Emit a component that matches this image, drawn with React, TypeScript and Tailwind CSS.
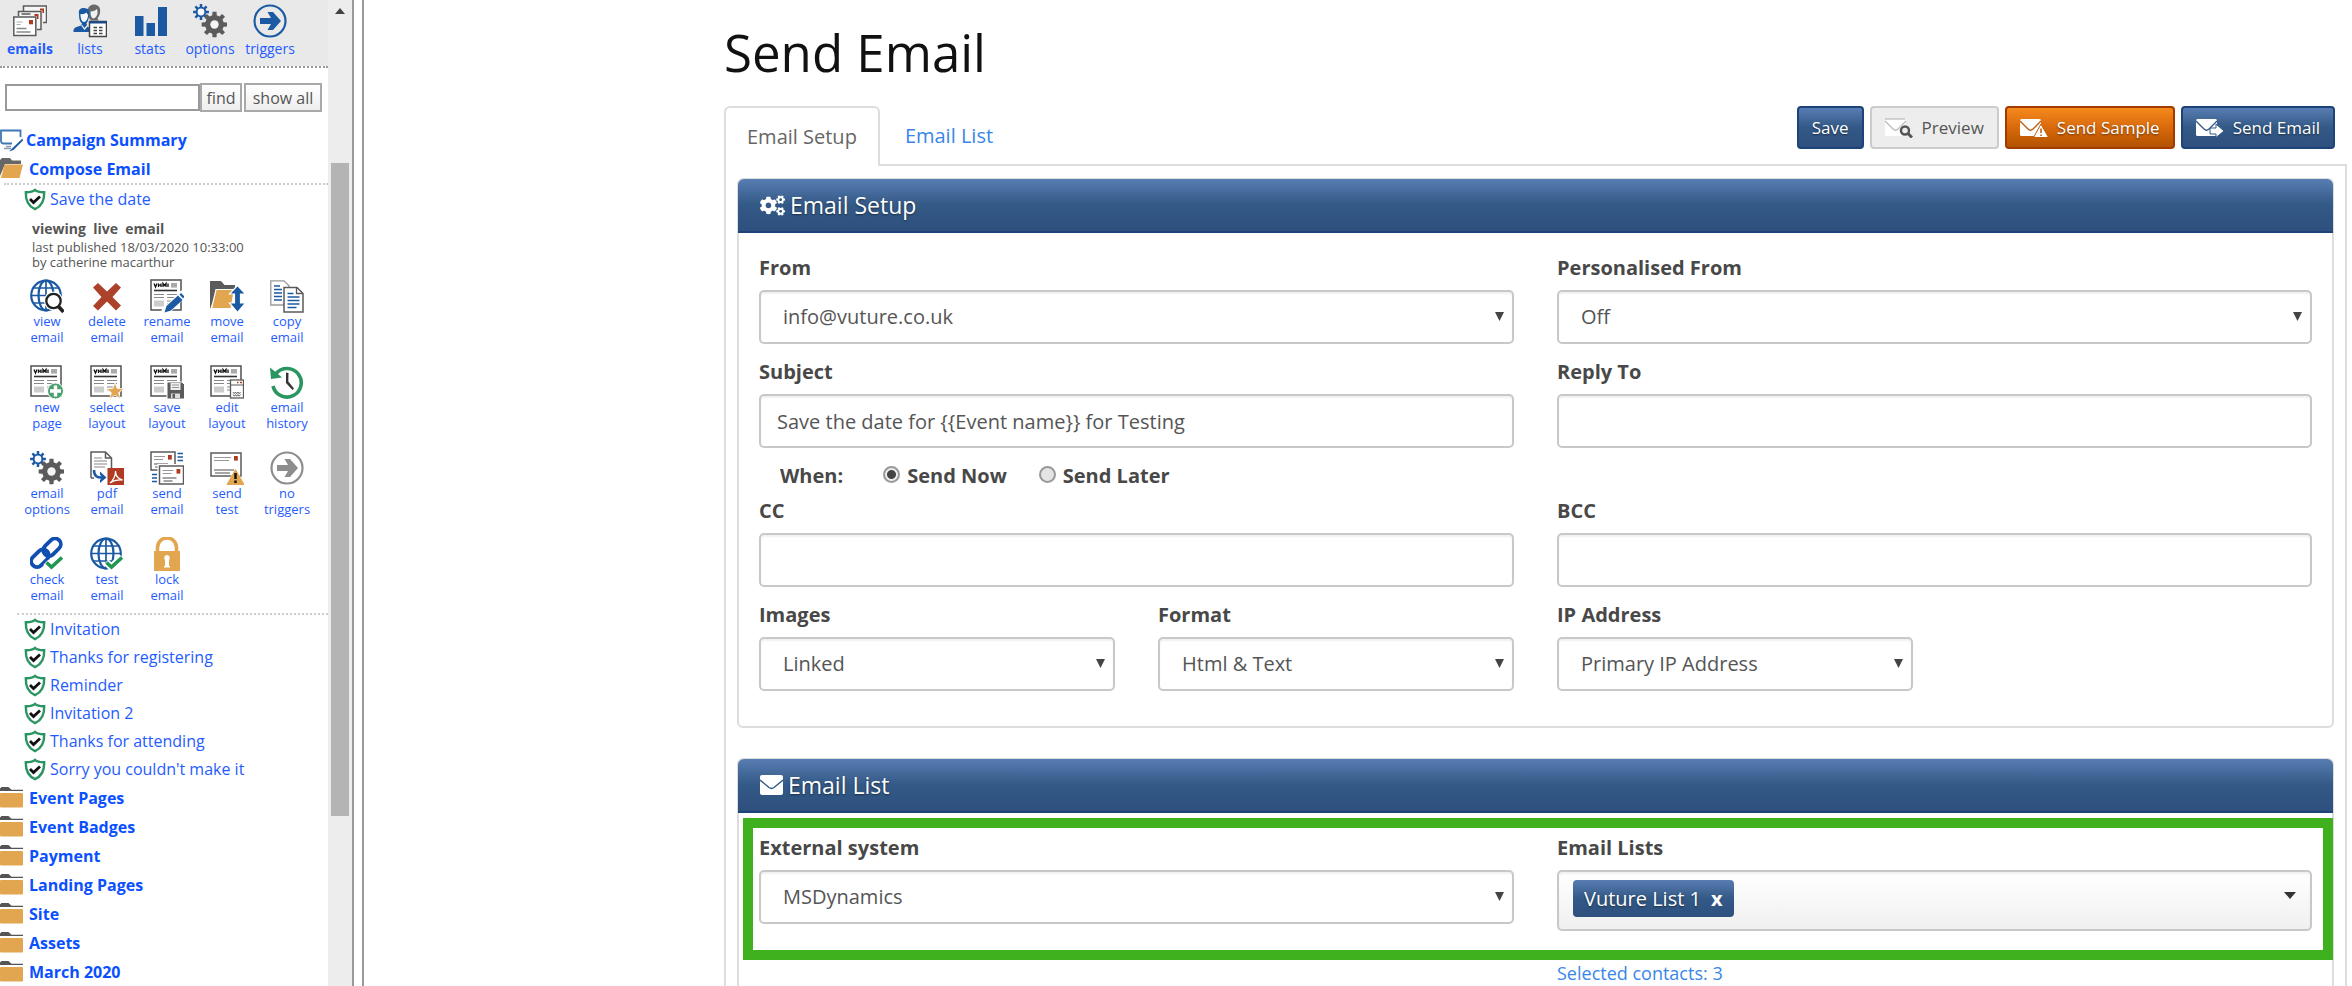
import React, { useState } from 'react';
import { FaCogs } from 'react-icons/fa';

const BLUE = '#1b5aa3';
const DARK = '#5b5b5b';
const TAN = '#e2a550';
const GREEN = '#2a9560';

const gearPath = (cx: number, cy: number, outer: number, inner: number, teeth = 8) => {
  const pts: string[] = [];
  const step = (Math.PI * 2) / teeth;
  for (let i = 0; i < teeth; i++) {
    const a = i * step;
    [[-0.3, inner], [-0.2, outer], [0.2, outer], [0.3, inner]].forEach(([o, r]) => {
      pts.push(`${(cx + r * Math.sin(a + o * step)).toFixed(2)} ${(cy - r * Math.cos(a + o * step)).toFixed(2)}`);
    });
  }
  return `M${pts.join('L')}Z`;
};

const Icon: React.FC<{ children: React.ReactNode }> = ({ children }) => (
  <svg width="34" height="34" viewBox="0 0 34 34" fill="none" className="shrink-0" aria-hidden="true">
    {children}
  </svg>
);

/* Shared pieces */
const Gears = () => (
  <>
    <path d={gearPath(8, 8, 8, 5.4)} fill={BLUE} />
    <circle cx="8" cy="8" r="3.4" fill="#f6f8fb" />
    <path d={gearPath(21.5, 20.5, 13, 9.4)} fill={DARK} />
    <circle cx="21.5" cy="20.5" r="4.2" fill="#f4f4f4" />
  </>
);

const Newspaper = () => (
  <>
    <rect x="1" y="1" width="30" height="30" fill="#fff" stroke={DARK} strokeWidth="1.6" />
    <path d="M4 4.500l1.500 3.500 1.500-3.500M8.500 4.500v3.500M11 4.500V8M8.500 6.200H11M13 8V4.500l1.500 2 1.500-2V8M18 4.500V8" stroke="#111" strokeWidth="1.300" />
    <rect x="21" y="4" width="6" height="4.6" fill="#aaa" />
    <path d="M4 11.500h23" stroke="#333" strokeWidth="1.600" />
    <path d="M4 15.500h10M17 15.500h10M4 18.500h10M17 18.500h10M17 22h6M17 25h5" stroke="#888" strokeWidth="1.200" />
    <rect x="4" y="21.500" width="10" height="6" fill="#ccc" />
  </>
);

const Globe = () => (
  <g stroke={BLUE} strokeWidth="2.200">
    <circle cx="16" cy="16.500" r="14.800" fill="#fff" />
    <ellipse cx="16" cy="16.500" rx="7.500" ry="14.800" />
    <path d="M16 2v29M2 16.500h28M4 9h24M4 24h24" strokeWidth="1.700" />
  </g>
);

const TickBadge = () => (
  <>
    <path d="M16 25l5 5 11-10" stroke="#fff" strokeWidth="7" />
    <path d="M16.500 25.500l5 4.500 10.500-9.500" stroke="#219653" strokeWidth="3.600" />
  </>
);

const Letter = ({ x, y, w, h }: { x: number; y: number; w: number; h: number }) => (
  <>
    <rect x={x} y={y} width={w} height={h} fill="#fff" stroke={DARK} strokeWidth="1.500" />
    <rect x={x + w - 7} y={y + 3} width="3.800" height="4.600" fill="#b03a1c" />
    <path d={`M${x + 3} ${y + 4.5}h${w - 13}M${x + 3} ${y + 7.5}h${w - 15}`} stroke="#999" strokeWidth="1.100" />
    <path d={`M${x + 3} ${y + h - 6}h${w - 10}M${x + 4} ${y + h - 3}h${w - 15}`} stroke="#888" strokeWidth="1.300" />
  </>
);

const icons: Record<string, React.ReactNode> = {
  emails: (
    <>
      <path d="M10.500 7V2h23v16.500H30V7z" fill="#f6f6f6" />
      <path d="M10.500 7V2h23v16.500H30" stroke={DARK} strokeWidth="1.500" />
      <path d="M27 4.500h4v4.500h-1.500V6.500H27z" fill="#b03a1c" />
      <path d="M5.500 12.500V7.500H28v18h-4v-13z" fill="#f6f6f6" />
      <path d="M5.500 12V7.500H28v18h-4M8.500 10h9" stroke={DARK} strokeWidth="1.500" />
      <path d="M21.500 10h4v5H24v-3h-2.500z" fill="#b03a1c" />
      <rect x="0.800" y="13" width="22" height="18.500" fill="#fff" stroke={DARK} strokeWidth="1.500" />
      <rect x="16" y="16" width="4" height="4.300" fill="#b03a1c" />
      <path d="M3.500 18h6M3.500 20.500h4" stroke="#aaa" />
      <path d="M3.500 24.500h10M3.500 28h14" stroke="#888" strokeWidth="1.400" />
    </>
  ),
  lists: (
    <>
      <path d="M15 5c1-6 11-6 12 0 .5 4-.5 7-2.500 9l1 2.500H18L15 13z" fill="#6a6a6a" />
      <path d="M17.500 7.500c3 0 5-1 6.500-2.500 1.500 4 0 8.500-3.500 9.500-2 0-3-3-3-7z" fill="#f1f1f1" />
      <path d="M6 10C5 4 10 3.500 13 4.500c4 0 4 4 3 8-.6 4-2 6-2.500 7l1 3 3 2v3.500H.500c-.5-3 1-4.500 4.500-5.500l3-1 1-2c-2-2-3-3.500-3-9.500z" fill={BLUE} />
      <path d="M7.500 10c3 .5 5-.5 6-1.500.5 1.500 1.500 1.500 1.500 2.500 0 4-2 7-4 7-2.500 0-3.500-4-3.500-8z" fill="#f6f8fb" />
      <path d="M8.500 21l3 4 3-3.500" stroke="#f6f8fb" strokeWidth="1.200" />
      <rect x="16.500" y="17.500" width="17" height="15" fill="#fff" stroke="#444" strokeWidth="1.500" />
      <path d="M16 18.300h18" stroke="#1d4a86" strokeWidth="2.400" />
      <path d="M20.500 23.500h3.500M26 23.500h3.500M20.500 26.500h3.500M26 26.500h3.500M20.500 29.500h3.500M26 29.500h3.500" stroke="#444" strokeWidth="1.500" />
    </>
  ),
  stats: <path d="M2 12h8.500v20H2zM13.500 19H22v13h-8.500zM25 3h9v29h-9z" fill={BLUE} />,
  options: <Gears />,
  triggers: (
    <>
      <circle cx="17" cy="17" r="15.500" stroke={BLUE} strokeWidth="2.200" />
      <path d="M7 14h11L14.500 8H20l8 9-8 9h-5.500L18 20H7z" fill={BLUE} />
    </>
  ),
  view: (
    <>
      <Globe />
      <circle cx="23.500" cy="22" r="9.500" fill="#fff" />
      <circle cx="23.500" cy="22" r="7.200" fill="#fff" stroke="#222" strokeWidth="2.300" />
      <path d="M28.500 27.500l5 5.500" stroke="#222" strokeWidth="3.600" />
    </>
  ),
  delete: <path d="M8 4l9 8.500L26 4l5 4.500-8.500 9.500 8.500 8.500L26 31.500l-9-9-9 9L3 27l8.500-9L3 8.500z" fill="#ad422b" />,
  rename: (
    <>
      <Newspaper />
      <path d="M14 34L34 14" stroke="#fff" strokeWidth="8" />
      <path d="M14.500 33.500l2-6.500L28 16.500l4.500 4.500L21 31.500zM29.500 15.500l1.500-1.500 3.500 3.500-1.500 2z" fill={BLUE} />
    </>
  ),
  move: (
    <>
      <path d="M0 30V2h11l3.500 4H25v7H7z" fill={DARK} />
      <path d="M6 10.500h18.500L21 29.500H1.500z" fill={TAN} stroke="#fff" strokeWidth="1.200" />
      <path d="M27.500 6.500l8 8.500h-5v9h5l-8 9.500-8-9.500h5v-9h-5z" fill={BLUE} stroke="#fff" strokeWidth="1.200" />
    </>
  ),
  copy: (
    <>
      <path d="M.8 1.800H14l5 5V26H.800z" fill="#fff" stroke="#999" strokeWidth="1.300" />
      <path d="M4 7h6M4 10.500h8M4 14h8M4 17.500h8M4 21h8" stroke={BLUE} strokeWidth="1.300" />
      <path d="M14 8.500h13l6 6V33H14z" fill="#fff" stroke={DARK} strokeWidth="1.500" />
      <path d="M26.500 8.500v6H33" stroke={DARK} strokeWidth="1.300" />
      <path d="M17.500 14.500h6M17.500 18h12M17.500 21.500h12M17.500 25h12M17.500 28.500h9" stroke={BLUE} strokeWidth="1.400" />
    </>
  ),
  new: (
    <>
      <Newspaper />
      <circle cx="25.500" cy="26" r="8" fill="#4da06f" stroke="#fff" />
      <path d="M25.500 20.500v11M20 26h11" stroke="#fff" strokeWidth="3.400" />
    </>
  ),
  select: (
    <>
      <Newspaper />
      <path d="M25 17.500l2.200 6 6.800.2-5.400 4 2 6.300-5.600-3.800-5.600 3.800 2-6.300-5.400-4 6.800-.2z" fill={TAN} stroke="#fff" strokeWidth=".8" />
    </>
  ),
  save: (
    <>
      <Newspaper />
      <path d="M17 17h15l2.500 2.500V34H17z" fill={DARK} stroke="#fff" />
      <path d="M20.500 18h10v7h-10z" fill="#eee" />
      <path d="M22 20h7M22 22.500h7" stroke="#999" />
      <path d="M21 28.500h9V33h-9z" fill="#ddd" />
      <path d="M22.500 29h2.500v4h-2.500z" fill={DARK} />
    </>
  ),
  edit: (
    <>
      <Newspaper />
      <rect x="20.500" y="15" width="13" height="18" fill="#fff" stroke={DARK} strokeWidth="1.300" />
      <path d="M20.500 20h13" stroke={DARK} />
      <path d="M27 17.500h1.500M30 17.500h2" stroke="#b03a1c" strokeWidth="1.500" />
      <path d="M23 27l1.200 1.700 1.300-1.700 1.200 1.700 1.300-1.700 1.200 1.700 1.300-1.700M23 29.500l1.200 1.700 1.300-1.700 1.200 1.700 1.300-1.700 1.200 1.700 1.300-1.700" stroke="#555" strokeWidth=".9" />
    </>
  ),
  history: (
    <>
      <path d="M6 8.500A14.300 14.300 0 1 1 3 21" stroke={GREEN} strokeWidth="3.600" />
      <path d="M0 2.500l1 11.500 11-1.500-4-3.500z" fill={GREEN} />
      <path d="M16 7.500l2.500.5-.2 8.500 5.700 7-1.500 1.500-6.500-7z" fill="#333" />
    </>
  ),
  pdf: (
    <>
      <path d="M1 27V1h14.500l6 6v10M15.500 1v6h6" fill="#fff" stroke={DARK} strokeWidth="1.500" />
      <path d="M1 27h3" stroke={DARK} strokeWidth="1.500" />
      <path d="M4 7h8M4 10h13M4 13h13M4 16h11" stroke="#888" strokeWidth="1.200" />
      <path d="M4 19c0 6 3 8 9 7.500" stroke={BLUE} strokeWidth="2.500" />
      <path d="M10 20.500l6.500 6-6.500 5.500v-3l2-2.500-2-3z" fill={BLUE} />
      <rect x="17.500" y="17" width="17" height="17" fill="#b03a22" />
      <path d="M20 32c3-2 6-8 5.500-12 0 5 3 8 7 9-5-.5-9 .5-12.500 3z" stroke="#fff" strokeWidth="1.300" />
    </>
  ),
  send: (
    <>
      <Letter x={1} y={1} w={24} h={18} />
      <path d="M27.500 2.500H33M27.500 6H33M27.500 9.500H33M2 23.500h5M2 27h5M2 30.500h5" stroke={BLUE} strokeWidth="1.400" />
      <rect x="7.500" y="13" width="27" height="21" fill="#fff" />
      <Letter x={9.500} y={15} w={24} h={18} />
    </>
  ),
  test: (
    <>
      <Letter x={1} y={2} w={30} h={23} />
      <path d="M25.500 16.500L35 34H16z" fill="#fff" />
      <path d="M25.500 18.500L34 33.500H17z" fill={TAN} stroke={TAN} strokeLinejoin="round" />
      <path d="M25.500 22v6M25.500 29.500v2.500" stroke="#111" strokeWidth="2.500" />
    </>
  ),
  none: (
    <>
      <circle cx="17" cy="17" r="15.500" stroke="#8d8d8d" strokeWidth="2.200" />
      <path d="M7 14h11L14.500 8H20l8 9-8 9h-5.500L18 20H7z" fill="#8d8d8d" />
    </>
  ),
  check: (
    <>
      <g stroke="#0f4fb0" strokeWidth="3.800">
        <rect x="12" y="4.500" width="20" height="11.500" rx="5.700" transform="rotate(-45 22 10.200)" />
        <rect x="0" y="15.500" width="20" height="11.500" rx="5.700" transform="rotate(-45 10 21.200)" />
      </g>
      <TickBadge />
    </>
  ),
  globe: (
    <>
      <Globe />
      <TickBadge />
    </>
  ),
  lock: (
    <>
      <path d="M7.500 15V10.500a9.500 9.500 0 0 1 19 0V15" stroke={TAN} strokeWidth="3.600" />
      <rect x="4" y="14" width="26" height="20" fill={TAN} />
      <path d="M17 18a3 3 0 0 1 2 5v6h1v1.500h-6V29h1v-6a3 3 0 0 1 2-5z" fill="#fff" />
    </>
  ),
};

const Shield = () => (
  <svg width="22" height="23" viewBox="0 0 22 23" fill="none" className="shrink-0" aria-hidden="true">
    <path d="M11 1.800C8.500 4 5 4.300 1.800 4.200 1.500 12 4 18 11 21.200 18 18 20.500 12 20.200 4.200 17 4.300 13.500 4 11 1.800z" fill="#fff" stroke={GREEN} strokeWidth="2.400" />
    <path d="M6 11l3.500 3.500 6.500-6" stroke="#111" strokeWidth="2.800" />
  </svg>
);

const Monitor = () => (
  <svg width="23" height="23" viewBox="0 0 23 23" fill="none" className="shrink-0" aria-hidden="true">
    <path d="M12 14.500H3.500C2 14.500 1 13.500 1 12V1.500h19.500V8" stroke="#3d77b5" strokeWidth="1.800" />
    <path d="M4 19.500h7M6 17.500h5" stroke="#8a9fb5" strokeWidth="1.300" />
    <path d="M22.500 9.500L12 19.500l-3 3 4.500-1.500L23 11.500z" fill={BLUE} />
  </svg>
);

const OpenFolder = () => (
  <svg width="24" height="21" viewBox="0 0 24 21" className="shrink-0" aria-hidden="true">
    <path d="M0 18V2l2-2h8l2 2.500h9V6H5z" fill="#666" />
    <path d="M4.500 6.500H23L19.500 20H1z" fill={TAN} />
  </svg>
);

const ClosedFolder = () => (
  <svg width="24" height="21" viewBox="0 0 24 21" className="shrink-0" aria-hidden="true">
    <path d="M0 1.500L1.500 0h7l3 2.700H23V4H0z" fill="#555" />
    <rect x="0" y="6" width="23" height="14.500" rx="1" fill={TAN} />
  </svg>
);

/* Envelope glyph of the toolbar buttons, with a badge in its lower right corner */
const Envelope: React.FC<{ line: string; children?: React.ReactNode }> = ({ line, children }) => (
  <svg width="28" height="20" viewBox="0 0 28 20" fill="none" className="shrink-0" aria-hidden="true">
    <rect x="0" y="1" width="21" height="17" rx="1.500" fill="#fff" />
    <path d="M0 3l8 8c1.500 1.500 3.500 1.500 5 0l8-8" stroke={line} strokeWidth="1.300" />
    {children}
  </svg>
);

const topNav = ['emails', 'lists', 'stats', 'options', 'triggers'];

const actions: [string, string, string][] = [
  ['view', 'view', 'email'],
  ['delete', 'delete', 'email'],
  ['rename', 'rename', 'email'],
  ['move', 'move', 'email'],
  ['copy', 'copy', 'email'],
  ['new', 'new', 'page'],
  ['select', 'select', 'layout'],
  ['save', 'save', 'layout'],
  ['edit', 'edit', 'layout'],
  ['history', 'email', 'history'],
  ['options', 'email', 'options'],
  ['pdf', 'pdf', 'email'],
  ['send', 'send', 'email'],
  ['test', 'send', 'test'],
  ['none', 'no', 'triggers'],
  ['check', 'check', 'email'],
  ['globe', 'test', 'email'],
  ['lock', 'lock', 'email'],
];

const emails = ['Invitation', 'Thanks for registering', 'Reminder', 'Invitation 2', 'Thanks for attending', "Sorry you couldn't make it"];
const folders = ['Event Pages', 'Event Badges', 'Payment', 'Landing Pages', 'Site', 'Assets', 'March 2020'];

const EmailLink = ({ name }: { name: string }) => (
  <a href="#" className="flex h-7 items-center gap-1 pl-6 text-[#1f5cff]">
    <Shield />
    {name}
  </a>
);

const Sidebar = () => (
  <aside className="flex w-[354px] shrink-0 border-r-2 border-[#999] text-base">
    <div className="min-w-0 flex-1">
      <nav className="flex h-[68px] border-b-2 border-dotted border-[#999] bg-[#e9e9e9] bg-clip-padding pt-1">
        {topNav.map((name) => (
          <a
            key={name}
            href="#"
            className={`flex w-[60px] flex-col items-center text-sm leading-[22px] text-[#1f5cff] ${name === 'emails' ? 'font-bold' : ''}`}
          >
            <Icon>{icons[name]}</Icon>
            {name}
          </a>
        ))}
      </nav>

      <form className="flex items-center pt-[15px] pl-[5px] text-[#555]" onSubmit={(e) => e.preventDefault()}>
        <input aria-label="Search campaigns" className="h-[27px] w-[195px] border-2 border-[#999] bg-white px-1 outline-none" />
        <button className="h-[29px] w-[42px] border-2 border-[#a9a9a9] bg-gradient-to-b from-white to-[#eee] leading-5">find</button>
        <button type="button" className="ml-[2px] h-[29px] w-[78px] border-2 border-[#a9a9a9] bg-gradient-to-b from-white to-[#eee] leading-5">
          show all
        </button>
      </form>

      <a href="#" className="mt-[14px] flex h-7 items-center gap-[3px] font-bold text-[#0a50ff]">
        <Monitor />
        Campaign Summary
      </a>
      <a href="#" className="flex h-[29px] items-center gap-[5px] font-bold text-[#0a50ff]">
        <OpenFolder />
        Compose Email
      </a>

      <div className="ml-1 border-t-2 border-dotted border-[#ccc]" />
      <EmailLink name="Save the date" />

      <div className="mt-1 pl-8 text-[#555]">
        <p className="text-sm leading-[23px] font-bold whitespace-pre">viewing  live  email</p>
        <p className="text-[13px] leading-[15px]">last published 18/03/2020 10:33:00</p>
        <p className="text-[13px] leading-[15px]">by catherine macarthur</p>
      </div>

      <div className="mt-[9px] ml-[17px] grid w-[300px] grid-cols-5 gap-y-5 pb-2 text-[13px] leading-4 text-[#1f5cff]">
        {actions.map(([icon, first, second]) => (
          <a key={`${first} ${second}`} href="#" className="flex flex-col items-center">
            <Icon>{icons[icon]}</Icon>
            <span>{first}</span>
            <span>{second}</span>
          </a>
        ))}
      </div>

      <div className="mt-[2px] ml-[17px] border-t-2 border-dotted border-[#ccc]" />
      {emails.map((name) => (
        <EmailLink key={name} name={name} />
      ))}
      {folders.map((name) => (
        <a key={name} href="#" className="flex h-[29px] items-center gap-[5px] font-bold text-[#0a50ff]">
          <ClosedFolder />
          {name}
        </a>
      ))}
    </div>

    <div className="flex w-6 shrink-0 flex-col items-center bg-[#ededed]">
      <svg width="10" height="6" viewBox="0 0 10 6" className="mt-2" aria-hidden="true">
        <path d="M5 0l5 6H0z" fill="#444" />
      </svg>
      <div className="mt-[149px] h-[653px] w-[18px] bg-[#b4b4b4]" />
    </div>
  </aside>
);

const field =
  'w-full rounded-[5px] border-2 border-[#c8c8c8] bg-white text-[#555] shadow-[inset_0_2px_2px_rgba(0,0,0,0.06)] outline-none';

const Field: React.FC<{ id: string; label: string; className?: string; children: React.ReactNode }> = ({ id, label, className = '', children }) => (
  <div className={className}>
    <label htmlFor={id} className="mb-[7px] block font-bold text-[#484848]">
      {label}
    </label>
    {children}
  </div>
);

const TextField = ({ id, label, value = '', className = 'col-span-2' }: { id: string; label: string; value?: string; className?: string }) => (
  <Field id={id} label={label} className={className}>
    <input id={id} type="text" defaultValue={value} className={`${field} h-[54px] px-4`} />
  </Field>
);

const SelectField = ({ id, label, value, className = 'col-span-2' }: { id: string; label: string; value: string; className?: string }) => (
  <Field id={id} label={label} className={className}>
    <div className="relative">
      <select id={id} className={`${field} h-[54px] appearance-none px-[22px]`}>
        <option>{value}</option>
      </select>
      <svg width="9" height="9" viewBox="0 0 9 9" className="pointer-events-none absolute top-[22px] right-[10px]" aria-hidden="true">
        <path d="M0 0h9L4.500 9z" fill="#444" />
      </svg>
    </div>
  </Field>
);

const Panel: React.FC<{ icon: React.ReactNode; title: string; children: React.ReactNode }> = ({ icon, title, children }) => (
  <section className="mb-[30px] rounded-md border-2 border-[#ddd] bg-white">
    <h2 className="-mx-px -mt-px flex h-[54px] items-center gap-[5px] rounded-t-md border-b-2 border-[#1c437a] bg-gradient-to-b from-[#587db3] via-[#335986] to-[#2e507f] pl-[22px] text-[23px] text-white [text-shadow:0_1px_2px_rgba(0,0,0,0.5)]">
      {icon}
      {title}
    </h2>
    <div className="px-5 pt-5 pb-[35px]">{children}</div>
  </section>
);

const buttonBase = 'flex h-[43px] items-center gap-[9px] rounded border-2 px-[13px] text-[17px] leading-6';
const blueButton = 'border-[#1c437a] bg-gradient-to-b from-[#587db3] via-[#335986] to-[#2e507f] text-white [text-shadow:0_1px_2px_rgba(0,0,0,0.5)]';

const App: React.FC = () => {
  const [when, setWhen] = useState('now');
  const [lists, setLists] = useState(['Vuture List 1']);

  return (
    <div className="flex h-screen overflow-hidden bg-white font-['Open_Sans',sans-serif]">
      <Sidebar />
      <div className="w-[10px] shrink-0 border-r-2 border-[#999]" />

      <main className="min-w-0 flex-1 pr-[5px] pl-[360px] text-xl leading-[30px]">
        <h1 className="pt-[18px] text-[51px] leading-[68px] font-normal text-[#111]">Send Email</h1>

        <div className="mt-5 flex items-start justify-between">
          <nav className="relative z-10 -mb-[2px] flex">
            <a href="#" className="flex h-[60px] items-center rounded-t-md border-2 border-b-0 border-[#ddd] bg-white px-[21px] text-[#666]">
              Email Setup
            </a>
            <a href="#" className="flex h-[60px] items-center px-[25px] text-[#3a86e8]">
              Email List
            </a>
          </nav>
          <div className="flex gap-[6px] pr-3">
            <button className={`${buttonBase} ${blueButton}`}>Save</button>
            <button className={`${buttonBase} border-[#ccc] bg-[#ededed] text-[#555]`}>
              <Envelope line="#bbb">
                <path d="M0 1h20" stroke="#aaa" />
                <circle cx="20" cy="12.500" r="6" fill="#ededed" />
                <circle cx="20" cy="12.500" r="4" stroke="#555" strokeWidth="2.400" />
                <path d="M23 15.500l4 4" stroke="#555" strokeWidth="3" />
              </Envelope>
              Preview
            </button>
            <button className={`${buttonBase} border-[#a33b00] bg-gradient-to-b from-[#f58a1c] via-[#d96a0c] to-[#b35200] text-white [text-shadow:0_1px_2px_rgba(0,0,0,0.5)]`}>
              <Envelope line="#c05a08">
                <path d="M21 6l7.500 13.500h-15z" fill="#fff" stroke="#c05a08" />
                <path d="M21 10.500v4.500M21 16.500v1.500" stroke="#c05a08" strokeWidth="1.500" />
              </Envelope>
              Send Sample
            </button>
            <button className={`${buttonBase} ${blueButton}`}>
              <Envelope line="#335986">
                <path d="M14 10h6V6l8 7-8 6.500V16h-6z" fill="#fff" stroke="#335986" />
              </Envelope>
              Send Email
            </button>
          </div>
        </div>

        <div className="h-screen border-2 border-[#ddd] px-[11px] pt-3">
          <Panel icon={<FaCogs size={25} />} title="Email Setup">
            <div className="grid grid-cols-4 gap-x-[43px] gap-y-[13px]">
              <SelectField id="from" label="From" value="info@vuture.co.uk" />
              <SelectField id="personalised" label="Personalised From" value="Off" />
              <TextField id="subject" label="Subject" value="Save the date for {{Event name}} for Testing" />
              <TextField id="reply" label="Reply To" />
            </div>

            <fieldset className="flex pt-[13px] pb-[5px] pl-[21px] font-bold text-[#484848]">
              <legend className="float-left mr-10">When:</legend>
              {[
                ['now', 'Send Now'],
                ['later', 'Send Later'],
              ].map(([value, text]) => (
                <label key={value} className="mr-8 flex items-center gap-[7px]">
                  <input
                    type="radio"
                    name="when"
                    value={value}
                    checked={when === value}
                    onChange={() => setWhen(value)}
                    className="mb-1 size-[17px] appearance-none rounded-full border-2 border-[#999] bg-[#e4e4e4] checked:bg-[radial-gradient(circle,#444_0_4px,#eee_5px)]"
                  />
                  {text}
                </label>
              ))}
            </fieldset>

            <div className="grid grid-cols-4 gap-x-[43px] gap-y-[13px]">
              <TextField id="cc" label="CC" />
              <TextField id="bcc" label="BCC" />
              <SelectField id="images" label="Images" value="Linked" className="" />
              <SelectField id="format" label="Format" value="Html & Text" className="" />
              <SelectField id="ip" label="IP Address" value="Primary IP Address" className="" />
            </div>
          </Panel>

          <Panel
            icon={
              <svg width="23" height="20" viewBox="0 0 23 20" fill="none" aria-hidden="true">
                <rect width="23" height="20" rx="2" fill="#fff" />
                <path d="M0 5l9 7.500c2 1.500 3 1.500 5 0L23 5" stroke="#335986" strokeWidth="1.400" />
              </svg>
            }
            title="Email List"
          >
            <div className="relative grid grid-cols-4 items-start gap-x-[43px]">
              <SelectField id="system" label="External system" value="MSDynamics" />
              <Field id="lists" label="Email Lists" className="col-span-2">
                <div className={`${field} flex h-[61px] items-start justify-between bg-gradient-to-b from-white to-[#f0f0f0] px-[14px] pt-2`}>
                  <div className="flex gap-2">
                    {lists.map((name) => (
                      <span key={name} className={`flex h-[37px] items-center gap-[10px] rounded px-[11px] ${blueButton}`}>
                        {name}
                        <button aria-label={`Remove ${name}`} className="font-bold" onClick={() => setLists(lists.filter((l) => l !== name))}>
                          x
                        </button>
                      </span>
                    ))}
                  </div>
                  <button id="lists" aria-label="Email Lists" className="mt-3">
                    <svg width="12" height="7" viewBox="0 0 12 7" aria-hidden="true">
                      <path d="M0 0h12L6 7z" fill="#333" />
                    </svg>
                  </button>
                </div>
              </Field>
              <div className="pointer-events-none absolute -top-[15px] -right-[21px] -bottom-[29px] -left-4 border-[10px] border-[#40b11e]" />
            </div>
            <div className="mt-7 grid grid-cols-2 gap-x-[43px]">
              <a href="#" className="col-start-2 text-lg text-[#3a86e8]">
                Selected contacts: 3
              </a>
            </div>
          </Panel>
        </div>
      </main>
    </div>
  );
};

export default App;
